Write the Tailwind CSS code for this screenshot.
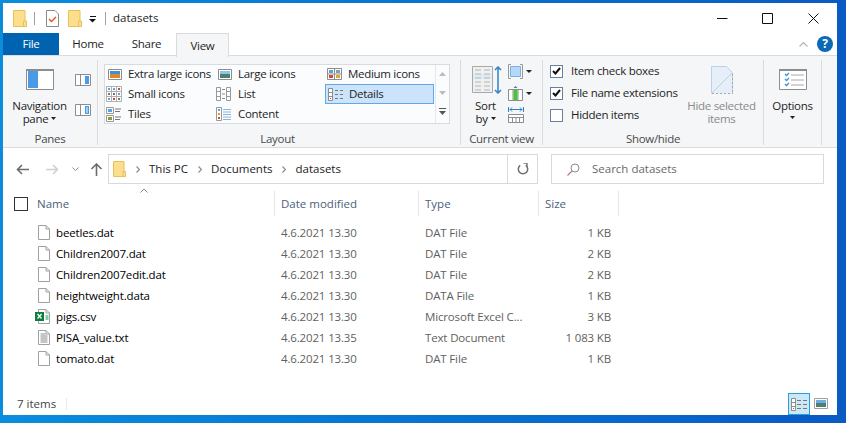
<!DOCTYPE html>
<html lang="en">
<head>
    <meta charset="UTF-8">
    <meta name="viewport" content="width=device-width, initial-scale=1.0">
    <title>datasets</title>
    <script src="https://cdn.jsdelivr.net/npm/@tailwindcss/browser@4"></script>
</head>
<body class="bg-linear-to-r from-[#0b8ddc] to-[#0a5ac4] w-[846px] h-[423px] overflow-hidden font-['Open_Sans',sans-serif] text-[11.5px] leading-[16px] text-[#1e1e1e]">
    <div id="window" class="ml-[3px] mt-[3px] w-[834px] h-[412px] bg-white flex flex-col">

        <!-- title bar -->
        <div class="h-[30px] flex items-center shrink-0">
            <svg class="ml-[10px] w-[14px] h-[17px]" viewBox="0 0 14 17"><path d="M.5.5h11.5v16H.5z" fill="#fdde8c" stroke="#e6c25a"/><path d="M10.500 11h3v5.500h-3z" fill="#fdde8c" stroke="#e6c25a"/></svg>
            <div class="ml-[7px] w-px h-[13px] bg-[#a0a0a0]"></div>
            <svg class="ml-[11px] w-[13px] h-[17px]" viewBox="0 0 13 17"><path d="M.5.5h8.500l3.500 3.500v12.500h-12z" fill="#fff" stroke="#8a8a8a"/><path d="M3 9l2.500 2.500 4.500-4.500" fill="none" stroke="#e2582a" stroke-width="1.500"/></svg>
            <svg class="ml-[9px] w-[14px] h-[17px]" viewBox="0 0 14 17"><path d="M.5.500h11.500v16H.5z" fill="#fdde8c" stroke="#e6c25a"/><path d="M10.500 11h3v5.500h-3z" fill="#fdde8c" stroke="#e6c25a"/></svg>
            <svg class="ml-[7px] mt-[2px] w-[8px] h-[7px]" viewBox="0 0 8 7"><path d="M1 0h6v1H1z" fill="#111"/><path d="M0 3h7L3.500 6.500z" fill="#111"/></svg>
            <div class="ml-[8px] w-px h-[13px] bg-[#a0a0a0]"></div>
            <span class="ml-[7px]">datasets</span>
            <div class="ml-auto flex items-center">
                <svg class="w-[11px] h-[11px]" viewBox="0 0 11 11"><path d="M0 5.500h10.500" stroke="#111"/></svg>
                <svg class="ml-[34px] w-[11px] h-[11px]" viewBox="0 0 11 11"><path d="M.5.500h10v10H.5z" fill="none" stroke="#111"/></svg>
                <svg class="ml-[35px] mr-[18px] w-[11px] h-[11px]" viewBox="0 0 11 11"><path d="M.5.500l10 10M10.500.500l-10 10" stroke="#111"/></svg>
            </div>
        </div>

        <!-- ribbon tabs -->
        <div class="h-[23px] flex items-stretch shrink-0 border-b border-[#dadbdc] relative tracking-[-0.3px]">
            <div class="w-[56px] bg-[#0063b1] text-white flex items-center justify-center">File</div>
            <div class="w-[58px] flex items-center justify-center">Home</div>
            <div class="w-[59px] flex items-center justify-center">Share</div>
            <div class="w-[53px] h-[24px] bg-[#f5f6f7] border border-b-0 border-[#dadbdc] flex items-center justify-center relative z-10">View</div>
            <div class="ml-auto flex items-center">
                <svg class="w-[9px] h-[6px]" viewBox="0 0 9 6"><path d="M.5 5.500l4-4 4 4" fill="none" stroke="#b5b5b5" stroke-width="1.200"/></svg>
                <div class="ml-[9px] mr-[4px] w-[16px] h-[16px] rounded-full bg-[#0a6ab8] text-white font-bold text-[12px] flex items-center justify-center">?</div>
            </div>
        </div>

        <!-- ribbon -->
        <div class="h-[92px] bg-[#f5f6f7] border-b border-[#dadbdc] flex shrink-0 pt-[4px] tracking-[-0.3px]">

            <!-- panes -->
            <div class="w-[95px] h-[85px] border-r border-[#dadbdc] flex flex-col">
                <div class="flex flex-1">
                    <div class="w-[72px] flex flex-col items-center pl-[1px]">
                        <svg class="mt-[9px] w-[28px] h-[21px]" viewBox="0 0 28 21"><path d="M.5.500h27v20H.5z" fill="#fff" stroke="#8d8d8d"/><path d="M0 0h28v2H0z" fill="#8d8d8d"/><path d="M2 2h10v17H2z" fill="#4a9be6"/></svg>
                        <div class="mt-[9px] text-center leading-[13px]">Navigation</div>
                        <div class="flex items-center gap-[3px] leading-[13px]">pane <svg class="w-[5px] h-[3px]" viewBox="0 0 5 3"><path d="M0 0h5L2.500 3z" fill="#222"/></svg></div>
                    </div>
                    <div class="flex flex-col">
                        <svg class="mt-[14px] w-[16px] h-[12px]" viewBox="0 0 16 12"><path d="M.5.500h15v11H.5z" fill="#fff" stroke="#8d8d8d"/><path d="M10 2h4v8h-4z" fill="#4a9be6"/><path d="M5.500 1v10" stroke="#8d8d8d"/></svg>
                        <svg class="mt-[18px] w-[16px] h-[12px]" viewBox="0 0 16 12"><path d="M.5.500h15v11H.5z" fill="#fff" stroke="#8d8d8d"/><path d="M10 2h4v8h-4z" fill="#4a9be6"/><path d="M5.500 1v10" stroke="#8d8d8d"/><path d="M11 4h2M11 6h2M11 8h2" stroke="#fff"/></svg>
                    </div>
                </div>
                <div class="text-center text-[#4a4a4a] -mb-[2px]">Panes</div>
            </div>

            <!-- layout -->
            <div class="w-[363px] h-[85px] border-r border-[#dadbdc] flex flex-col">
                <div class="flex-1 pt-[4px]">
                    <div class="ml-[6px] w-[346px] h-[60px] bg-[#fbfcfd] border border-[#dadbdc] flex">
                        <div class="flex-1 -mt-px grid grid-cols-[110px_109px_110px] grid-rows-[20px_20px_20px] pl-[1px]">
                            <div class="flex items-center gap-[6px]">
                                <svg class="w-[14px] h-[11px] ml-[2px]" viewBox="0 0 14 11"><path d="M.5.500h13v10H.5z" fill="#fff" stroke="#8d8d8d"/><path d="M2 2h10v7H2z" fill="#d98a2b"/><path d="M2 2h10v3H2z" fill="#3f8fd8"/></svg>
                                <span class="whitespace-nowrap">Extra large icons</span>
                            </div>
                            <div class="flex items-center gap-[6px]">
                                <svg class="w-[14px] h-[11px] ml-[2px]" viewBox="0 0 14 11"><path d="M.5.500h13v10H.5z" fill="#fff" stroke="#8d8d8d"/><path d="M2 2h10v3H2z" fill="#8cc4ee"/><path d="M2 5h10v4H2z" fill="#4e7f6c"/></svg>
                                <span>Large icons</span>
                            </div>
                            <div class="flex items-center gap-[6px]">
                                <svg class="w-[15px] h-[12px] ml-[2px]" viewBox="0 0 15 12"><path d="M.5.500h14v11H.5z" fill="#fff" stroke="#8d8d8d"/><path d="M7.500 0v12M0 6h15" stroke="#8d8d8d"/><path d="M2 2h4v3H2z" fill="#5ba3de"/><path d="M9 2h4v3H9z" fill="#7f9faf"/><path d="M2 7h4v3H2z" fill="#d8483a"/><path d="M9 7h4v3H9z" fill="#e0a52f"/></svg>
                                <span>Medium icons</span>
                            </div>
                            <div class="flex items-center gap-[6px]">
                                <svg class="w-[16px] h-[16px]" viewBox="0 0 16 16"><path d="M.5.500h15v15H.5z" fill="#fff" stroke="#b0b0b0"/><path d="M5.500 0v16M10.500 0v16M0 5.500h16M0 10.500h16" stroke="#b0b0b0"/><path d="M2 2h2v2H2zM7 2h2v2H7zM12 7h2v2h-2zM2 12h2v2H2z" fill="#5ba3de"/><path d="M7 12h2v2H7zM12 2h2v2h-2z" fill="#d8483a"/><path d="M2 7h2v2H2zM7 7h2v2H7zM12 12h2v2h-2z" fill="#777"/></svg>
                                <span>Small icons</span>
                            </div>
                            <div class="flex items-center gap-[7px]">
                                <svg class="w-[15px] h-[14px]" viewBox="0 0 15 14"><path d="M.5.500h4v13h-4zM10.500.500h4v13h-4z" fill="#fff" stroke="#999"/><path d="M0 4.500h5M0 9.500h5M10 4.500h5M10 9.500h5" stroke="#999"/><path d="M6 2.500h3M6 7h3M6 11.500h3" stroke="#8d8d8d"/></svg>
                                <span>List</span>
                            </div>
                            <div class="h-[20px] bg-[#cce4fb] border border-[#64a8e8] flex items-center gap-[6px] pl-[1px] mr-[1px]">
                                <svg class="w-[15px] h-[13px] ml-[1px]" viewBox="0 0 15 13"><path d="M.5.500h4v12h-4z" fill="#fff" stroke="#8d8d8d"/><path d="M0 4.500h5M0 8.500h5" stroke="#8d8d8d"/><path d="M2 10h1v1H2z" fill="#d8483a"/><path d="M7 2.500h3M12 2.500h3M7 6.500h3M12 6.500h3M7 10.500h3M12 10.500h3" stroke="#777"/></svg>
                                <span>Details</span>
                            </div>
                            <div class="flex items-center gap-[6px]">
                                <svg class="w-[16px] h-[15px]" viewBox="0 0 16 15"><path d="M.5.500h7v6h-7zM.5 8.500h7v6h-7z" fill="#fff" stroke="#999"/><path d="M2 2h4v3H2z" fill="#5ba3de"/><path d="M2 10h4v3H2z" fill="#7ca33b"/><path d="M9 2h6M9 4.500h5M9 10h6M9 12.500h5" stroke="#777"/></svg>
                                <span>Tiles</span>
                            </div>
                            <div class="flex items-center gap-[7px]">
                                <svg class="w-[15px] h-[14px]" viewBox="0 0 15 14"><path d="M.5.500h5v13h-5z" fill="#fff" stroke="#999"/><path d="M2 2h2v2H2z" fill="#5ba3de"/><path d="M2 6h2v2H2z" fill="#e0a52f"/><path d="M2 10h2v2H2z" fill="#d8483a"/><path d="M7 2.500h8M7 5h8M7 7.500h8M7 10h8M7 12.500h8" stroke="#8bb4d8"/></svg>
                                <span>Content</span>
                            </div>
                        </div>
                        <div class="w-[14px] border-l border-[#e6e7e8] flex flex-col items-center">
                            <svg class="mt-[7px] w-[7px] h-[4px]" viewBox="0 0 7 4"><path d="M0 4l3.500-4L7 4z" fill="#bcbcbc"/></svg>
                            <svg class="mt-[15px] w-[7px] h-[4px]" viewBox="0 0 7 4"><path d="M0 0l3.500 4L7 0z" fill="#bcbcbc"/></svg>
                            <svg class="mt-[13px] w-[7px] h-[7px]" viewBox="0 0 7 7"><path d="M0 .5h7" stroke="#555"/><path d="M0 3l3.500 4L7 3z" fill="#555"/></svg>
                        </div>
                    </div>
                </div>
                <div class="text-center text-[#4a4a4a] pr-[3px] -mb-[2px]">Layout</div>
            </div>

            <!-- current view -->
            <div class="w-[82px] h-[85px] border-r border-[#dadbdc] flex flex-col">
                <div class="flex flex-1">
                    <div class="w-[47px] flex flex-col items-center pl-[2px]">
                        <svg class="mt-[6px] ml-[4px] w-[31px] h-[28px]" viewBox="0 0 31 28"><path d="M.5.500h20v26H.5z" fill="#f0f0f0" stroke="#a8a8a8"/><path d="M1 8h19v5H1z" fill="#dcecf8"/><path d="M3 4h6M12 4h6M3 8h6M12 8h6M3 12h6M12 12h6M3 16h6M12 16h6M3 20h6M12 20h6M3 24h6M12 24h6" stroke="#b5b5b5"/><path d="M26 1v26" stroke="#2f80c8" stroke-width="1.500"/><path d="M23 4l3-3 3 3M23 24l3 3 3-3" fill="none" stroke="#2f80c8" stroke-width="1.500"/></svg>
                        <div class="mt-[5px] text-center leading-[13px]">Sort</div>
                        <div class="flex items-center gap-[3px] leading-[13px]">by <svg class="w-[5px] h-[3px]" viewBox="0 0 5 3"><path d="M0 0h5L2.500 3z" fill="#222"/></svg></div>
                    </div>
                    <div class="flex flex-col">
                        <div class="mt-[4px] flex items-center gap-[3px]">
                            <svg class="w-[15px] h-[15px]" viewBox="0 0 15 15"><path d="M3 .5H.5v14H3M12 .5h2.500v14H12" fill="none" stroke="#999"/><path d="M2.500 2.500h10v10h-10z" fill="#b5d8f7" stroke="#7ab3e3"/></svg>
                            <svg class="w-[6px] h-[3px]" viewBox="0 0 6 3"><path d="M0 0h6L3 3z" fill="#222"/></svg>
                        </div>
                        <div class="mt-[7px] flex items-center gap-[3px]">
                            <svg class="w-[15px] h-[15px]" viewBox="0 0 15 15"><path d="M.5 3.500h14v11H.5z" fill="#fff" stroke="#8d8d8d"/><path d="M5 4v10M10 4v10" stroke="#8d8d8d"/><path d="M5.500 4h4v10h-4z" fill="#4cc23a"/><path d="M7.500 0L5.500 2h4z" fill="#2f80c8"/></svg>
                            <svg class="w-[6px] h-[3px]" viewBox="0 0 6 3"><path d="M0 0h6L3 3z" fill="#222"/></svg>
                        </div>
                        <svg class="mt-[6px] w-[16px] h-[16px]" viewBox="0 0 16 16"><path d="M.5 0v5M15.500 0v5M2 2.500h12" stroke="#2f80c8"/><path d="M4 .5L2 2.500l2 2M12 .5l2 2-2 2" fill="none" stroke="#2f80c8"/><path d="M.5 7.500h15v8H.5z" fill="#fff" stroke="#8d8d8d"/><path d="M0 10.500h16M4.500 10v6M8 10v6M11.500 10v6" stroke="#8d8d8d"/></svg>
                    </div>
                </div>
                <div class="text-center text-[#4a4a4a] -mb-[2px]">Current view</div>
            </div>

            <!-- show/hide -->
            <div class="w-[221px] h-[85px] border-r border-[#dadbdc] flex flex-col">
                <div class="flex flex-1">
                    <div class="w-[140px] pl-[7px] pt-[4px] flex flex-col gap-[8px]">
                        <div class="flex items-center gap-[8px] h-[14px]">
                            <div class="w-[13px] h-[13px] border border-[#6a7f99] bg-white flex items-center justify-center">
                                <svg class="w-[9px] h-[8px]" viewBox="0 0 9 8"><path d="M1 4l2.500 2.500L8 1" fill="none" stroke="#111" stroke-width="2"/></svg>
                            </div>
                            <span>Item check boxes</span>
                        </div>
                        <div class="flex items-center gap-[8px] h-[14px]">
                            <div class="w-[13px] h-[13px] border border-[#6a7f99] bg-white flex items-center justify-center">
                                <svg class="w-[9px] h-[8px]" viewBox="0 0 9 8"><path d="M1 4l2.500 2.500L8 1" fill="none" stroke="#111" stroke-width="2"/></svg>
                            </div>
                            <span class="whitespace-nowrap">File name extensions</span>
                        </div>
                        <div class="flex items-center gap-[8px] h-[14px]">
                            <div class="w-[13px] h-[13px] border border-[#6a7f99] bg-white"></div>
                            <span>Hidden items</span>
                        </div>
                    </div>
                    <div class="w-[77px] flex flex-col items-center">
                        <svg class="mt-[6px] w-[22px] h-[28px]" viewBox="0 0 22 28"><path d="M.5.500h15l6 6v21H.5z" fill="#e6eef9"/><path d="M.5 27.500V.5h15l6 6v21" fill="none" stroke="#bcd0e6"/><path d="M1 27L21 7" stroke="#bcd0e6"/><path d="M1 27.500h21" stroke="#a8a8a8" stroke-dasharray="2 2"/><path d="M21.500 8v19" stroke="#a8a8a8" stroke-dasharray="2 2"/></svg>
                        <div class="mt-[5px] text-center leading-[13px] text-[#8a8a8a] whitespace-nowrap">Hide selected</div>
                        <div class="text-center leading-[13px] text-[#8a8a8a]">items</div>
                    </div>
                </div>
                <div class="text-center text-[#4a4a4a] -mb-[2px]">Show/hide</div>
            </div>

            <!-- options -->
            <div class="w-[58px] h-[85px] border-r border-[#dadbdc] flex flex-col items-center">
                <svg class="mt-[9px] w-[28px] h-[21px]" viewBox="0 0 28 21"><path d="M.5.500h27v20H.5z" fill="#fff" stroke="#8d8d8d"/><path d="M0 0h28v2H0z" fill="#8d8d8d"/><path d="M6 5l1.500 1.500L10 4M6 10l1.500 1.500L10 9M6 15l1.500 1.500L10 14" fill="none" stroke="#3f8fd8" stroke-width="1.300"/><path d="M12 6h13M12 11h13M12 16h13" stroke="#a8a8a8"/></svg>
                <div class="mt-[9px] text-center leading-[13px]">Options</div>
                <svg class="mt-[4px] w-[5px] h-[3px]" viewBox="0 0 5 3"><path d="M0 0h5L2.500 3z" fill="#222"/></svg>
            </div>
        </div>

        <!-- address row -->
        <div class="h-[36px] flex items-center shrink-0 pt-[6px]">
            <svg class="ml-[13px] w-[13px] h-[11px]" viewBox="0 0 13 11"><path d="M13 5.500H1.500M6 1L1.500 5.500 6 10" fill="none" stroke="#6d6d6d" stroke-width="1.600"/></svg>
            <svg class="ml-[17px] w-[13px] h-[11px]" viewBox="0 0 13 11"><path d="M0 5.500h11.500M7 1l4.500 4.500L7 10" fill="none" stroke="#d0d0d0" stroke-width="1.600"/></svg>
            <svg class="ml-[13px] w-[7px] h-[4px]" viewBox="0 0 7 4"><path d="M.5.500l3 3 3-3" fill="none" stroke="#8a8a8a"/></svg>
            <svg class="ml-[11px] w-[13px] h-[13px]" viewBox="0 0 13 13"><path d="M6.500 13V1.500M1.500 6l5-5 5 5" fill="none" stroke="#6d6d6d" stroke-width="1.600"/></svg>
            <div class="ml-[5px] w-[430px] h-[30px] border border-[#d9d9d9] flex items-center">
                <svg class="ml-[4px] w-[13px] h-[16px]" viewBox="0 0 13 16"><path d="M.5.500h10.500v15H.5z" fill="#fdde8c" stroke="#e6c25a"/><path d="M10 10.500h2.500v5H10z" fill="#fdde8c" stroke="#e6c25a"/></svg>
                <svg class="ml-[10px] w-[4px] h-[7px]" viewBox="0 0 4 7"><path d="M.5.500l3 3-3 3" fill="none" stroke="#8a8a8a" stroke-width="1.200"/></svg>
                <span class="ml-[9px] text-[#222]">This PC</span>
                <svg class="ml-[10px] w-[4px] h-[7px]" viewBox="0 0 4 7"><path d="M.5.500l3 3-3 3" fill="none" stroke="#8a8a8a" stroke-width="1.200"/></svg>
                <span class="ml-[9px] text-[#222]">Documents</span>
                <svg class="ml-[10px] w-[4px] h-[7px]" viewBox="0 0 4 7"><path d="M.5.500l3 3-3 3" fill="none" stroke="#8a8a8a" stroke-width="1.200"/></svg>
                <span class="ml-[9px] text-[#222]">datasets</span>
                <div class="ml-auto w-[30px] h-full border-l border-[#d9d9d9] flex items-center justify-center">
                    <svg class="w-[12px] h-[12px]" viewBox="0 0 12 12"><path d="M8.800 2.300A4.700 4.700 0 1 1 3.200 2.300" fill="none" stroke="#6d6d6d" stroke-width="1.500"/><path d="M6.500 0h3.500v3.500" fill="none" stroke="#6d6d6d" stroke-width="1.300"/></svg>
                </div>
            </div>
            <div class="ml-[13px] w-[273px] h-[30px] border border-[#d9d9d9] flex items-center">
                <svg class="ml-[15px] w-[13px] h-[13px]" viewBox="0 0 13 13"><circle cx="8" cy="5" r="4" fill="none" stroke="#8a8a8a"/><path d="M5 8l-4.500 4.500" stroke="#b07a9c" stroke-width="1.200"/></svg>
                <span class="ml-[12px] text-[#6a6a6a]">Search datasets</span>
            </div>
        </div>

        <!-- column headers -->
        <div class="relative h-[25px] mt-[7px] flex items-center shrink-0 text-[#4c607a]">
            <svg class="absolute left-[137px] top-[-3px] w-[8px] h-[5px]" viewBox="0 0 8 5"><path d="M.5 4.500l3.500-3.500 3.500 3.500" fill="none" stroke="#8a8a8a"/></svg>
            <div class="ml-[11px] w-[14px] h-[14px] border border-[#333]"></div>
            <div class="w-[247px] h-full pl-[9px] flex items-center border-r border-[#e5e5e5]">Name</div>
            <div class="w-[144px] h-full pl-[6px] flex items-center border-r border-[#e5e5e5]">Date modified</div>
            <div class="w-[120px] h-full pl-[6px] flex items-center border-r border-[#e5e5e5]">Type</div>
            <div class="w-[80px] h-full pl-[6px] flex items-center border-r border-[#e5e5e5]">Size</div>
        </div>

        <!-- file rows -->
        <div id="files" class="mt-[6px] flex-1 flex flex-col tracking-[-0.15px]"></div>

        <!-- status bar -->
        <div class="h-[22px] flex items-center shrink-0 relative">
            <span class="ml-[14px] text-[#444]">7 items</span>
            <div class="ml-[10px] w-px h-[12px] bg-[#ececec]"></div>
            <div class="ml-auto mr-[27px] w-[22px] h-[22px] bg-[#cbe8f6] border border-[#26a0da] flex items-center justify-center">
                <svg class="w-[16px] h-[13px]" viewBox="0 0 16 13"><path d="M.5.500h4v12h-4z" fill="#fff" stroke="#8d8d8d"/><path d="M0 4.500h5M0 8.500h5" stroke="#8d8d8d"/><path d="M2 10h1v1H2z" fill="#d8483a"/><path d="M6 2.500h4M12 2.500h4M6 6.500h4M12 6.500h4M6 10.500h4M12 10.500h4" stroke="#777"/></svg>
            </div>
            <svg class="absolute right-[9px] top-[5px] w-[14px] h-[11px]" viewBox="0 0 14 11"><path d="M.5.500h13v10H.5z" fill="#fff" stroke="#a0a0a0"/><path d="M2 2h10v3H2z" fill="#6aaee8"/><path d="M2 5h10v4H2z" fill="#4e7f6c"/></svg>
        </div>
    </div>

    <script>
        const files = [
            ['beetles.dat', '4.6.2021 13.30', 'DAT File', '1 KB', 'blank'],
            ['Children2007.dat', '4.6.2021 13.30', 'DAT File', '2 KB', 'blank'],
            ['Children2007edit.dat', '4.6.2021 13.30', 'DAT File', '2 KB', 'blank'],
            ['heightweight.data', '4.6.2021 13.30', 'DATA File', '1 KB', 'blank'],
            ['pigs.csv', '4.6.2021 13.30', 'Microsoft Excel C...', '3 KB', 'excel'],
            ['PISA_value.txt', '4.6.2021 13.35', 'Text Document', '1 083 KB', 'text'],
            ['tomato.dat', '4.6.2021 13.30', 'DAT File', '1 KB', 'blank'],
        ];

        const page = '<path d="M.5.500h7.500l3.500 3.500v10.500H.5z" fill="#fff" stroke="#a0a0a0"/><path d="M8 .5v3.500h3.500" fill="none" stroke="#a0a0a0"/>';
        const icons = {
            blank: page,
            text: page + '<path d="M2.500 4h5M2.500 6h7M2.500 8h7M2.500 10h7M2.500 12h7" stroke="#8a8a8a"/>',
            excel: page + '<path d="M-3 3h9v9h-9z" fill="#107c41"/><path d="M-.5 5l4 4.500M3.500 5l-4 4.500" stroke="#fff" stroke-width="1.200"/><path d="M7.500 6h3v5h-3z" fill="#7fd0a5"/>',
        };

        const list = document.getElementById('files');
        files.forEach(([name, date, type, size, icon]) => {
            const row = document.createElement('div');
            row.className = 'h-[21px] flex items-center';
            row.innerHTML = `
                <div class="w-[271px] flex items-center pl-[35px]">
                    <svg class="w-[12px] h-[15px] overflow-visible shrink-0" viewBox="0 0 12 15">${icons[icon]}</svg>
                    <span class="ml-[6px] text-black">${name}</span>
                </div>
                <div class="w-[144px] pl-[7px] text-[#5f5f5f]">${date}</div>
                <div class="w-[120px] pl-[7px] text-[#5f5f5f]">${type}</div>
                <div class="w-[73px] text-right text-[#5f5f5f]">${size}</div>`;
            list.appendChild(row);
        });
    </script>
</body>
</html>
